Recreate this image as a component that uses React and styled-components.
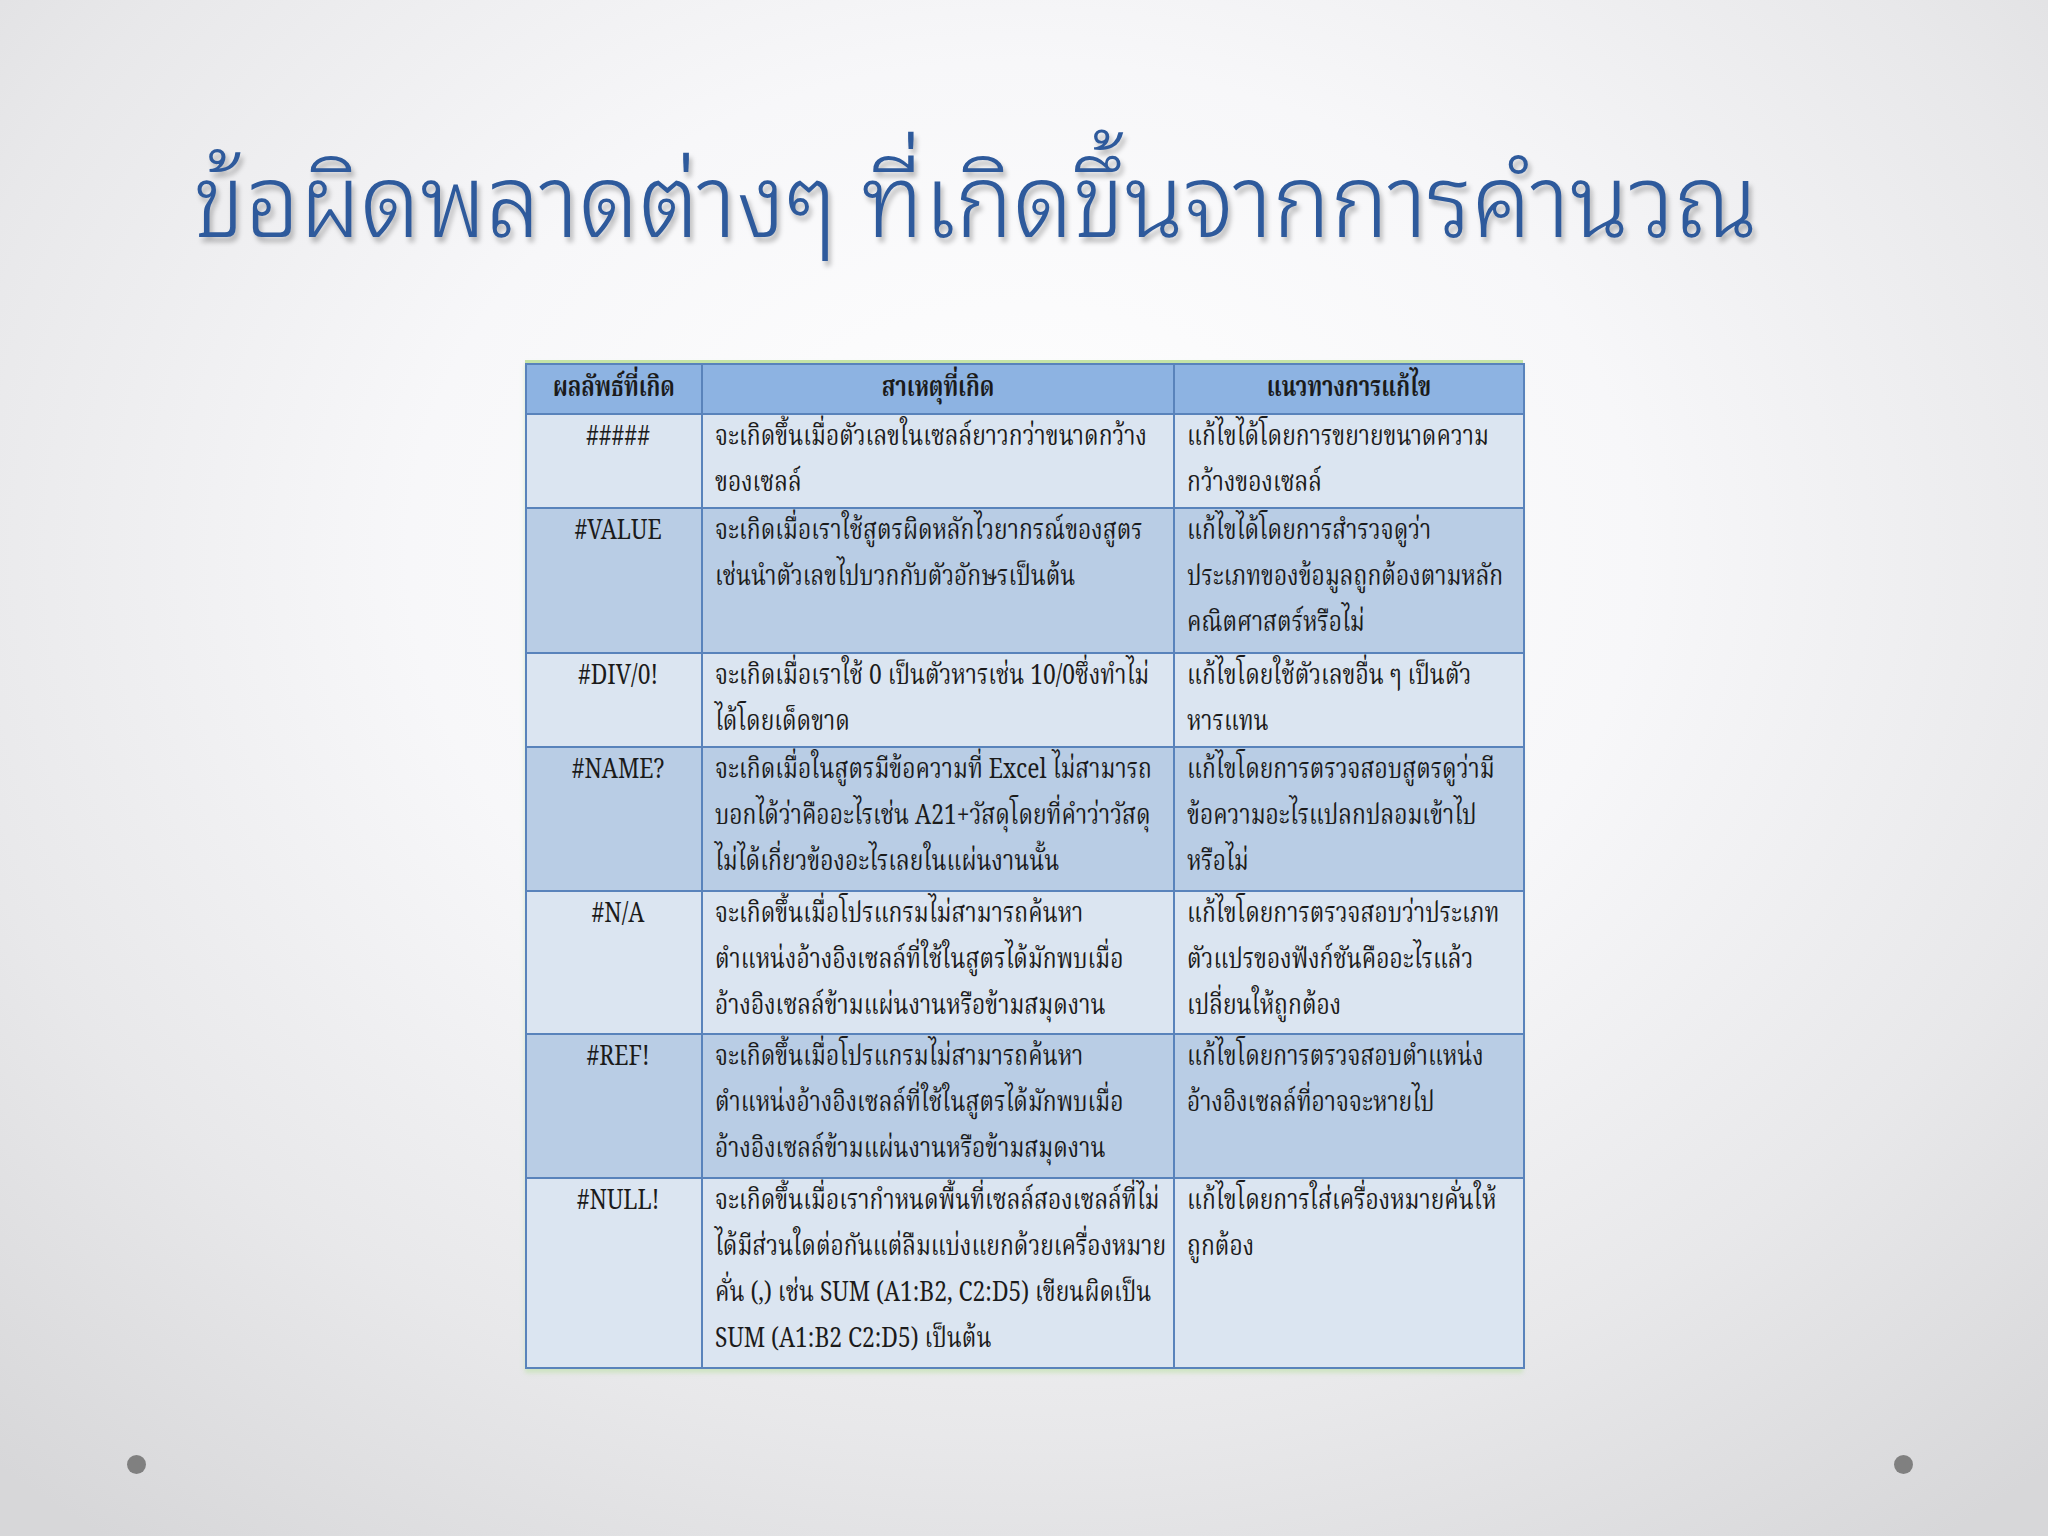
import React from "react";
import styled, { createGlobalStyle } from "styled-components";

const Global = createGlobalStyle`
  html, body { margin: 0; padding: 0; }
  body { width: 2048px; height: 1536px; overflow: hidden; }
`;

const Slide = styled.div`
  position: relative;
  width: 2048px;
  height: 1536px;
  box-sizing: border-box;
  background: radial-gradient(ellipse 75% 80% at 50% 36%, #ffffff 0%, #f7f7f9 40%, #e8e8ea 72%, #d7d7d9 100%);
  display: flex;
  flex-direction: column;
  font-family: "Liberation Serif", serif;
`;

const Title = styled.h1`
  margin: 0;
  padding: 140px 0 0 193px;
  height: 360px;
  box-sizing: border-box;
  font-family: "Noto Sans Thai Looped", "Loma", "Garuda", "Noto Sans Thai", "Noto Sans", "DejaVu Sans", sans-serif;
  font-weight: 300;
  font-size: 102px;
  line-height: 1;
  color: #2e5a9c;
  text-shadow: 3px 5px 6px rgba(0, 0, 0, 0.26);
  white-space: nowrap;
`;

const TitleText = styled.span`
  display: inline-block;
  transform: scaleX(0.95);
  transform-origin: left center;
`;

const TableWrap = styled.div`
  margin-left: 525px;
  width: 998px;
  border-top: 3px solid #c4e3a6;
  box-shadow: 0 4px 4px rgba(190, 225, 170, 0.6);
`;

const Table = styled.table`
  width: 100%;
  border-collapse: collapse;
  table-layout: fixed;
  font-family: "Angsana New", "TH Sarabun New", "Norasi", "Kinnari", "Noto Serif Thai", "Noto Sans Thai", "Liberation Serif", serif;
  font-size: 28px;
  color: #1b1b1b;
`;

const HeadRow = styled.tr`
  height: 50px;
`;

const Row = styled.tr`
  height: ${(p) => p.$h}px;
`;

const HeadCell = styled.th`
  background: #8db3e2;
  border: 2px solid #5983bb;
  padding: 0;
  font-weight: 700;
  text-align: center;
  line-height: 46px;
`;

const Cell = styled.td`
  background: ${(p) => (p.$dark ? "#b9cde5" : "#dbe5f1")};
  border: 2px solid #5983bb;
  padding: 0 4px 0 12px;
  vertical-align: top;
  line-height: 46px;
  text-align: ${(p) => (p.$center ? "center" : "left")};
`;

const Line = styled.span`
  display: block;
  white-space: nowrap;
  transform: scaleX(${(p) => p.$sx || 0.815});
  transform-origin: ${(p) => (p.$center ? "center" : "left")} center;
`;

const Dot = styled.div`
  position: absolute;
  top: 1455px;
  left: ${(p) => p.$x}px;
  width: 19px;
  height: 19px;
  border-radius: 50%;
  background: #808080;
`;

const rows = [
  {
    code: "#####",
    cause: ["จะเกิดขึ้นเมื่อตัวเลขในเซลล์ยาวกว่าขนาดกว้าง", "ของเซลล์"],
    fix: ["แก้ไขได้โดยการขยายขนาดความ", "กว้างของเซลล์"],
    h: 94,
  },
  {
    code: "#VALUE",
    cause: ["จะเกิดเมื่อเราใช้สูตรผิดหลักไวยากรณ์ของสูตร", "เช่นนำตัวเลขไปบวกกับตัวอักษรเป็นต้น"],
    fix: ["แก้ไขได้โดยการสำรวจดูว่า", "ประเภทของข้อมูลถูกต้องตามหลัก", "คณิตศาสตร์หรือไม่"],
    h: 145,
  },
  {
    code: "#DIV/0!",
    cause: ["จะเกิดเมื่อเราใช้ 0 เป็นตัวหารเช่น 10/0ซึ่งทำไม่", "ได้โดยเด็ดขาด"],
    fix: ["แก้ไขโดยใช้ตัวเลขอื่น ๆ เป็นตัว", "หารแทน"],
    h: 94,
  },
  {
    code: "#NAME?",
    cause: [
      "จะเกิดเมื่อในสูตรมีข้อความที่ Excel ไม่สามารถ",
      "บอกได้ว่าคืออะไรเช่น A21+วัสดุโดยที่คำว่าวัสดุ",
      "ไม่ได้เกี่ยวข้องอะไรเลยในแผ่นงานนั้น",
    ],
    fix: ["แก้ไขโดยการตรวจสอบสูตรดูว่ามี", "ข้อความอะไรแปลกปลอมเข้าไป", "หรือไม่"],
    h: 144,
  },
  {
    code: "#N/A",
    cause: [
      "จะเกิดขึ้นเมื่อโปรแกรมไม่สามารถค้นหา",
      "ตำแหน่งอ้างอิงเซลล์ที่ใช้ในสูตรได้มักพบเมื่อ",
      "อ้างอิงเซลล์ข้ามแผ่นงานหรือข้ามสมุดงาน",
    ],
    fix: ["แก้ไขโดยการตรวจสอบว่าประเภท", "ตัวแปรของฟังก์ชันคืออะไรแล้ว", "เปลี่ยนให้ถูกต้อง"],
    h: 143,
  },
  {
    code: "#REF!",
    cause: [
      "จะเกิดขึ้นเมื่อโปรแกรมไม่สามารถค้นหา",
      "ตำแหน่งอ้างอิงเซลล์ที่ใช้ในสูตรได้มักพบเมื่อ",
      "อ้างอิงเซลล์ข้ามแผ่นงานหรือข้ามสมุดงาน",
    ],
    fix: ["แก้ไขโดยการตรวจสอบตำแหน่ง", "อ้างอิงเซลล์ที่อาจจะหายไป"],
    h: 144,
  },
  {
    code: "#NULL!",
    cause: [
      "จะเกิดขึ้นเมื่อเรากำหนดพื้นที่เซลล์สองเซลล์ที่ไม่",
      "ได้มีส่วนใดต่อกันแต่ลืมแบ่งแยกด้วยเครื่องหมาย",
      "คั่น (,) เช่น SUM (A1:B2, C2:D5) เขียนผิดเป็น",
      "SUM (A1:B2 C2:D5) เป็นต้น",
    ],
    fix: ["แก้ไขโดยการใส่เครื่องหมายคั่นให้", "ถูกต้อง"],
    h: 190,
  },
];

const Lines = ({ items, center }) =>
  items.map((t, i) => (
    <Line key={i} $center={center}>
      {t}
    </Line>
  ));

export default function App() {
  return (
    <>
      <Global />
      <Slide>
        <Title>
          <TitleText>ข้อผิดพลาดต่างๆ ที่เกิดขึ้นจากการคำนวณ</TitleText>
        </Title>
        <TableWrap>
          <Table>
            <colgroup>
              <col style={{ width: 176 }} />
              <col style={{ width: 472 }} />
              <col style={{ width: 350 }} />
            </colgroup>
            <thead>
              <HeadRow>
                <HeadCell><Line $center $sx={0.78}>ผลลัพธ์ที่เกิด</Line></HeadCell>
                <HeadCell><Line $center $sx={0.78}>สาเหตุที่เกิด</Line></HeadCell>
                <HeadCell><Line $center $sx={0.78}>แนวทางการแก้ไข</Line></HeadCell>
              </HeadRow>
            </thead>
            <tbody>
              {rows.map((r, i) => (
                <Row key={r.code} $h={r.h}>
                  <Cell $dark={i % 2 === 1} $center>
                    <Line $center>{r.code}</Line>
                  </Cell>
                  <Cell $dark={i % 2 === 1}>
                    <Lines items={r.cause} />
                  </Cell>
                  <Cell $dark={i % 2 === 1}>
                    <Lines items={r.fix} />
                  </Cell>
                </Row>
              ))}
            </tbody>
          </Table>
        </TableWrap>
        <Dot $x={127} />
        <Dot $x={1894} />
      </Slide>
    </>
  );
}
